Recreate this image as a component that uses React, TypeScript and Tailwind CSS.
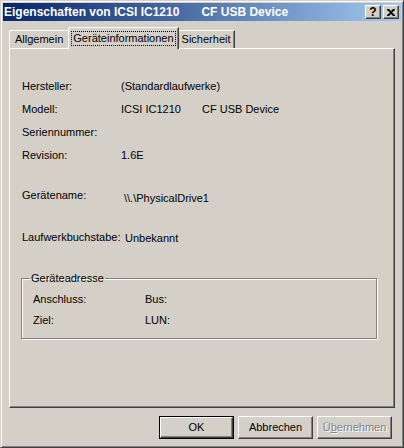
import React from "react";

const face = "bg-[#d4d0c8]";

function TitleButton({ children }: { children: React.ReactNode }) {
  return (
    <div className="flex h-[14px] w-[16px] items-center justify-center border border-t-white border-l-white border-r-[#404040] border-b-[#404040] bg-[#d4d0c8] shadow-[inset_-1px_-1px_#808080] text-black">
      {children}
    </div>
  );
}

function Button({
  children,
  isDefault,
  disabled,
  className = "",
}: {
  children: React.ReactNode;
  isDefault?: boolean;
  disabled?: boolean;
  className?: string;
}) {
  return (
    <div className={`h-[23px] w-[75px] ${isDefault ? "border border-black" : ""} ${className}`}>
      <div
        className={`flex h-full w-full items-center justify-center border border-t-white border-l-white border-r-[#404040] border-b-[#404040] shadow-[inset_-1px_-1px_#808080] ${
          disabled ? "text-[#808080] [text-shadow:1px_1px_#fff]" : "text-black"
        }`}
      >
        {children}
      </div>
    </div>
  );
}

function Row({ label, value, extra }: { label: string; value?: string; extra?: string }) {
  return (
    <div className="flex h-[23px] items-center">
      <span className="w-[99px] shrink-0">{label}</span>
      {value && <span className="w-[81px] shrink-0">{value}</span>}
      {extra && <span>{extra}</span>}
    </div>
  );
}

export default function App() {
  return (
    <div
      className={`h-[448px] w-[404px] ${face} border border-t-[#d4d0c8] border-l-[#d4d0c8] border-r-[#404040] border-b-[#404040] shadow-[inset_1px_1px_#fff,inset_-1px_-1px_#808080] p-[2px] font-['Liberation_Sans',Arial,sans-serif] text-[11px] text-black`}
    >
      {/* Title bar */}
      <div className="flex h-[18px] items-center bg-gradient-to-r from-[#0a246a] to-[#a6caf0] pl-[1px] pr-[2px]">
        <span className="whitespace-pre text-[12px] font-bold text-white">
          Eigenschaften von ICSI IC1210
        </span>
        <span className="ml-[22px] text-[12px] font-bold text-white">CF USB Device</span>
        <div className="ml-auto flex items-center gap-[2px]">
          <TitleButton>
            <span className="text-[12px] font-bold leading-none">?</span>
          </TitleButton>
          <TitleButton>
            <svg width="8" height="7" viewBox="0 0 8 7">
              <path d="M0 0h2l2 2 2-2h2v1L5 3.5 8 6v1H6L4 5 2 7H0V6l3-2.5L0 1z" fill="#000" />
            </svg>
          </TitleButton>
        </div>
      </div>

      {/* Tabs */}
      <div className="mt-[6px] flex h-[21px] items-end pl-[6px]">
        <div className="flex h-[18px] items-center rounded-tl-[2px] border-l border-t border-white px-[5px]">
          Allgemein
        </div>
        <div className="relative z-10 -mb-[1px] flex h-[22px] items-center rounded-tl-[2px] border-l border-t border-r border-t-white border-l-white border-r-[#404040] bg-[#d4d0c8] px-[2px] shadow-[inset_-1px_0_#808080]">
          <span className="border border-dotted border-black px-[1px] leading-[13px]">Geräteinformationen</span>
        </div>
        <div className="flex h-[18px] items-center border-t border-r border-t-white border-r-[#404040] px-[3px] shadow-[inset_-1px_0_#808080]">
          Sicherheit
        </div>
      </div>

      {/* Panel */}
      <div className="ml-[6px] h-[360px] w-[386px] border border-t-white border-l-white border-r-[#404040] border-b-[#404040] shadow-[inset_-1px_-1px_#808080] pl-[12px] pt-[26px]">
        <Row label="Hersteller:" value="(Standardlaufwerke)" />
        <Row label="Modell:" value="ICSI IC1210" extra="CF USB Device" />
        <Row label="Seriennummer:" />
        <Row label="Revision:" value="1.6E" />

        <div className="mt-[17px] flex h-[23px] items-center">
          <span className="w-[102px] shrink-0">Gerätename:</span>
          <span className="mt-[5px]">\\.\PhysicalDrive1</span>
        </div>

        <div className="mt-[19px] flex h-[23px] items-center">
          <span className="w-[103px] shrink-0">Laufwerkbuchstabe:</span>
          <span className="mt-[2px]">Unbekannt</span>
        </div>

        {/* Group box */}
        <fieldset className="ml-[-1px] mt-[23px] h-[67px] w-[356px] border border-[#808080] px-[11px] pb-0 pt-0 shadow-[1px_1px_#fff,inset_1px_1px_#fff]">
          <legend className="ml-[-3px] px-[1px] leading-[12px]">Geräteadresse</legend>
          <div className="flex h-[23px] items-center pt-[8px]">
            <span className="w-[112px]">Anschluss:</span>
            <span>Bus:</span>
          </div>
          <div className="mt-[2px] flex h-[23px] items-center">
            <span className="w-[112px]">Ziel:</span>
            <span>LUN:</span>
          </div>
        </fieldset>
      </div>

      {/* Buttons */}
      <div className="mt-[8px] flex justify-end pr-[9px]">
        <Button isDefault>OK</Button>
        <Button className="ml-[4px]">Abbrechen</Button>
        <Button disabled className="ml-[4px]">
          <span>
            Ü<span className="underline">b</span>ernehmen
          </span>
        </Button>
      </div>
    </div>
  );
}
